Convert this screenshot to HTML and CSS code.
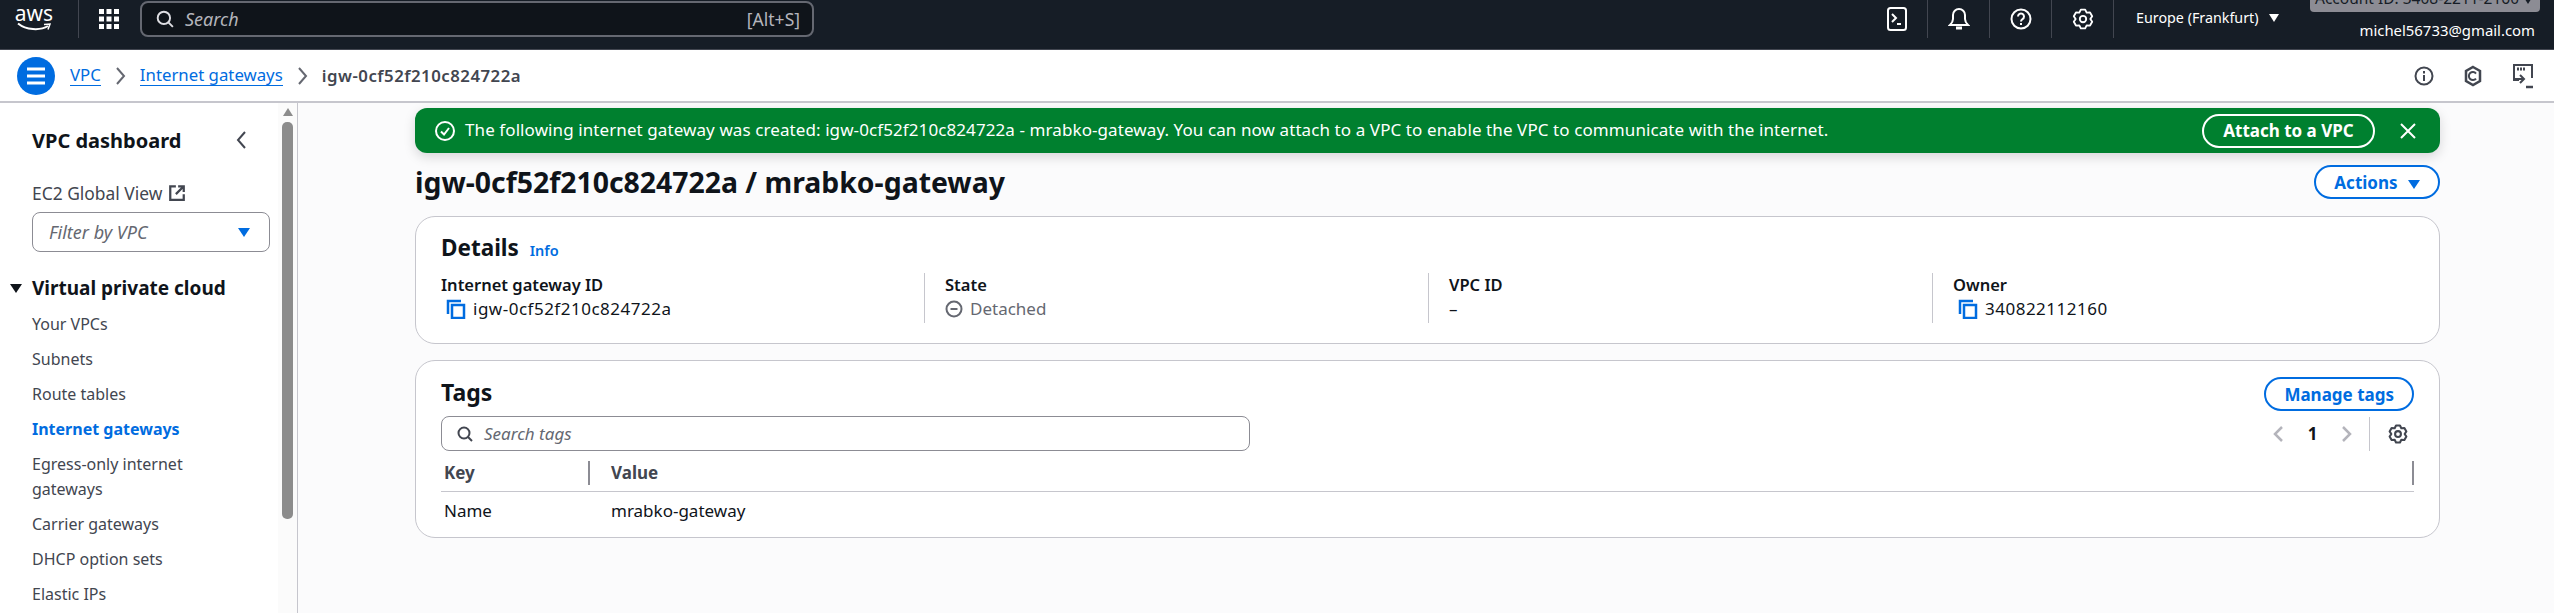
FILE: index.html
```html
<!DOCTYPE html>
<html lang="en">
<head>
  <meta charset="UTF-8">
  <title>igw-0cf52f210c824722a | VPC Console</title>
  <link rel="stylesheet" href="styles.css">
</head>
<body>

<header class="topbar">
  <div class="logo-wrap">
    <div class="logo">
      <span class="logo-text">aws</span>
      <svg class="logo-smile" width="34" height="10" viewBox="0 0 34 10"><path d="M1 1.5C9 8 23 9 31 4" fill="none" stroke="#fff" stroke-width="2"/><path d="M27 2.5l6-.5-2 5.500" fill="none" stroke="#fff" stroke-width="1.500"/></svg>
    </div>
  </div>
  <div class="apps">
    <svg width="20" height="20" viewBox="0 0 20 20" fill="#fff"><rect x="0" y="0" width="5" height="5"/><rect x="7.500" y="0" width="5" height="5"/><rect x="15" y="0" width="5" height="5"/><rect x="0" y="7.500" width="5" height="5"/><rect x="7.500" y="7.500" width="5" height="5"/><rect x="15" y="7.500" width="5" height="5"/><rect x="0" y="15" width="5" height="5"/><rect x="7.500" y="15" width="5" height="5"/><rect x="15" y="15" width="5" height="5"/></svg>
  </div>
  <div class="global-search">
    <svg width="18" height="18" viewBox="0 0 16 16" fill="none" stroke="#dedee3" stroke-width="1.700"><circle cx="7" cy="7" r="5.500"/><path d="M11 11l4 4"/></svg>
    <span class="global-search-text">Search</span>
    <span class="shortcut">[Alt+S]</span>
  </div>
  <div class="topbar-right">
    <div class="top-icon">
      <svg width="20" height="24" viewBox="0 0 20 24" fill="none" stroke="#fff" stroke-width="2"><rect x="1" y="1" width="18" height="22" rx="2.500"/><path d="M5 7l4 4-4 4M10 17h4"/></svg>
    </div>
    <div class="top-icon">
      <svg width="22" height="24" viewBox="0 0 22 24" fill="none" stroke="#fff" stroke-width="2"><path d="M2 18c2-2 3-3 3-6V8a6 6 0 0 1 12 0v4c0 3 1 4 3 6z"/><path d="M8 21h6" stroke-width="3"/></svg>
    </div>
    <div class="top-icon">
      <svg width="22" height="22" viewBox="0 0 22 22" fill="none" stroke="#fff" stroke-width="2"><circle cx="11" cy="11" r="9.500"/><path d="M8 8.500a3 3 0 1 1 4.500 2.600c-1 .6-1.500 1.200-1.500 2.400M11 15v2"/></svg>
    </div>
    <div class="top-icon top-icon-last">
      <svg width="22" height="24" viewBox="0 0 24 24" fill="none" stroke="#fff" stroke-width="2" stroke-linejoin="round"><path d="M9.640 1.770H14.360L16 5.070L19.680 4.840L22.040 8.930L20 12L22.040 15.070L19.680 19.160L16 18.930L14.360 22.230H9.640L8 18.930L4.320 19.160L1.960 15.070L4 12L1.960 8.930L4.320 4.840L8 5.070Z"/><circle cx="12" cy="12" r="3.500"/></svg>
    </div>
    <div class="region">Europe (Frankfurt) <span class="caret caret-white"></span></div>
    <div class="account">
      <div class="account-badge">Account ID: 3408-2211-2160 <span class="caret caret-dark"></span></div>
      <div class="account-mail">michel56733@gmail.com</div>
    </div>
  </div>
</header>

<nav class="crumbbar">
  <div class="menu-btn">
    <svg width="20" height="18" viewBox="0 0 20 18" fill="none" stroke="#fff" stroke-width="3"><path d="M1 2h18M1 9h18M1 16h18"/></svg>
  </div>
  <a class="crumb-link">VPC</a>
  <svg class="crumb-sep" width="10" height="18" viewBox="0 0 10 18" fill="none" stroke="#656871" stroke-width="2"><path d="M1 1l7 8-7 8"/></svg>
  <a class="crumb-link">Internet gateways</a>
  <svg class="crumb-sep" width="10" height="18" viewBox="0 0 10 18" fill="none" stroke="#656871" stroke-width="2"><path d="M1 1l7 8-7 8"/></svg>
  <span class="crumb-current">igw-0cf52f210c824722a</span>
  <div class="crumb-tools">
    <svg width="20" height="20" viewBox="0 0 20 20" fill="none" stroke="#424650" stroke-width="2"><circle cx="10" cy="10" r="8.500"/><path d="M10 9v6M10 5v2.500"/></svg>
    <svg width="20" height="22" viewBox="0 0 20 22" fill="none" stroke="#424650" stroke-width="2.500"><path d="M10 2l7 4v10l-7 4-7-4V6z"/><path d="M13 8.500a4 4 0 1 0 0 5" stroke-width="2"/></svg>
    <svg width="22" height="26" viewBox="0 0 22 26" fill="none" stroke="#424650" stroke-width="2"><path d="M7 17H2V2h18v13"/><path d="M5 6h9" stroke-dasharray="2 1" stroke-width="3"/><path d="M8 12l4 4-4 4M2 16h9" stroke-width="2"/><path d="M14 24h7" stroke-width="2.500"/></svg>
  </div>
</nav>

<div class="layout">
  <aside class="sidebar">
    <div class="side-scroll">
      <div class="side-title">
        <span>VPC dashboard</span>
        <svg width="10" height="18" viewBox="0 0 10 18" fill="none" stroke="#424650" stroke-width="2"><path d="M9 1L2 9l7 8"/></svg>
      </div>
      <a class="side-ec2">EC2 Global View
        <svg width="18" height="18" viewBox="0 0 16 16" fill="none" stroke="#424650" stroke-width="2"><path d="M7 2H2v12h12V9M9 2h5v5M14 2L7 9"/></svg>
      </a>
      <div class="side-filter">
        <span>Filter by VPC</span>
        <span class="caret caret-blue"></span>
      </div>
      <div class="side-section"><span class="caret caret-black"></span>Virtual private cloud</div>
      <ul class="side-list">
        <li>Your VPCs</li>
        <li>Subnets</li>
        <li>Route tables</li>
        <li class="active">Internet gateways</li>
        <li>Egress-only internet gateways</li>
        <li>Carrier gateways</li>
        <li>DHCP option sets</li>
        <li>Elastic IPs</li>
      </ul>
    </div>
    <div class="scrollbar">
      <span class="scroll-arrow"></span>
      <span class="scroll-thumb"></span>
    </div>
  </aside>

  <main class="content">
    <div class="flash">
      <svg width="22" height="22" viewBox="0 0 22 22" fill="none" stroke="#fff" stroke-width="2"><circle cx="11" cy="11" r="9"/><path d="M7 11.500l3 3 5-6.500"/></svg>
      <span class="flash-text">The following internet gateway was created: igw-0cf52f210c824722a - mrabko-gateway. You can now attach to a VPC to enable the VPC to communicate with the internet.</span>
      <button class="flash-btn">Attach to a VPC</button>
      <svg class="flash-close" width="18" height="18" viewBox="0 0 18 18" fill="none" stroke="#fff" stroke-width="2"><path d="M2 2l14 14M16 2L2 16"/></svg>
    </div>

    <div class="page-head">
      <h1>igw-0cf52f210c824722a / mrabko-gateway</h1>
      <button class="btn">Actions <span class="caret caret-blue"></span></button>
    </div>

    <section class="card details">
      <h2>Details <a class="info">Info</a></h2>
      <div class="detail-grid">
        <div class="detail-col">
          <div class="detail-label">Internet gateway ID</div>
          <div class="detail-value">
            <svg class="copy" width="20" height="20" viewBox="0 0 20 20" fill="none" stroke="#006ce0" stroke-width="2.500"><path d="M2 15V2h13"/><rect x="6" y="6" width="12" height="13"/></svg>
            igw-0cf52f210c824722a
          </div>
        </div>
        <div class="detail-col">
          <div class="detail-label">State</div>
          <div class="detail-value muted">
            <svg width="18" height="18" viewBox="0 0 18 18" fill="none" stroke="#656871" stroke-width="2"><circle cx="9" cy="9" r="7.500"/><path d="M5.500 9h7"/></svg>
            Detached
          </div>
        </div>
        <div class="detail-col">
          <div class="detail-label">VPC ID</div>
          <div class="detail-value">–</div>
        </div>
        <div class="detail-col">
          <div class="detail-label">Owner</div>
          <div class="detail-value">
            <svg class="copy" width="20" height="20" viewBox="0 0 20 20" fill="none" stroke="#006ce0" stroke-width="2.500"><path d="M2 15V2h13"/><rect x="6" y="6" width="12" height="13"/></svg>
            340822112160
          </div>
        </div>
      </div>
    </section>

    <section class="card tags">
      <div class="tags-head">
        <h2>Tags</h2>
        <button class="btn">Manage tags</button>
      </div>
      <div class="tags-tools">
        <div class="tag-search">
          <svg width="16" height="16" viewBox="0 0 16 16" fill="none" stroke="#424650" stroke-width="2"><circle cx="7" cy="7" r="5.500"/><path d="M11 11l4 4"/></svg>
          <span>Search tags</span>
        </div>
        <div class="pager">
          <svg width="11" height="18" viewBox="0 0 11 18" fill="none" stroke="#b4b4bb" stroke-width="2.500"><path d="M10 2L3 9l7 7"/></svg>
          <span class="page-num">1</span>
          <svg width="11" height="18" viewBox="0 0 11 18" fill="none" stroke="#b4b4bb" stroke-width="2.500"><path d="M1 2l7 7-7 7"/></svg>
          <span class="pager-gear">
            <svg width="20" height="20" viewBox="0 0 24 24" fill="none" stroke="#424650" stroke-width="2.500" stroke-linejoin="round"><path d="M9.640 1.770H14.360L16 5.070L19.680 4.840L22.040 8.930L20 12L22.040 15.070L19.680 19.160L16 18.930L14.360 22.230H9.640L8 18.930L4.320 19.160L1.960 15.070L4 12L1.960 8.930L4.320 4.840L8 5.070Z"/><circle cx="12" cy="12" r="3.500"/></svg>
          </span>
        </div>
      </div>
      <table class="tag-table">
        <thead>
          <tr>
            <th class="col-key"><span>Key</span></th>
            <th><span>Value</span></th>
          </tr>
        </thead>
        <tbody>
          <tr>
            <td>Name</td>
            <td>mrabko-gateway</td>
          </tr>
        </tbody>
      </table>
    </section>
  </main>
</div>

</body>
</html>
```

FILE: styles.css
```css
* {
  box-sizing: border-box;
}

html, body {
  height: 100%;
}

body {
  margin: 0;
  font-family: "Noto Sans", "Open Sans", sans-serif;
  font-size: 16px;
  color: #0f141a;
  background-color: #fff;
  overflow: hidden;
}

.caret {
  display: inline-block;
  width: 0;
  height: 0;
  border-style: solid;
  border-color: transparent;
  border-width: 9px 6px 0 6px;
}

.caret-white { border-top-color: #fff; border-width: 8px 5px 0 5px; }
.caret-dark { border-top-color: #161d26; border-width: 8px 5px 0 5px; }
.caret-blue { border-top-color: #006ce0; }
.caret-black { border-top-color: #0f141a; }

/* top bar */
.topbar {
  display: flex;
  height: 50px;
  background-color: #161d26;
  border-bottom: 1px solid #424650;
  color: #fff;
  overflow: hidden;
}

.logo-wrap {
  width: 79px;
  height: 38px;
  padding-left: 16px;
  border-right: 1px solid #424650;
}

.logo {
  display: flex;
  flex-direction: column;
  width: 36px;
  align-items: center;
}

.logo-text {
  font-size: 21px;
  line-height: 21px;
  margin-top: 3px;
}

.logo-smile {
  margin-top: -2px;
}

.apps {
  width: 61px;
  height: 38px;
  padding: 9px 0 0 20px;
}

.global-search {
  display: flex;
  align-items: center;
  gap: 11px;
  width: 674px;
  height: 36px;
  margin-top: 1px;
  padding: 0 12px 0 14px;
  background-color: #0f141a;
  border: 2px solid #656871;
  border-radius: 8px;
  color: #b4b4bb;
  font-size: 18px;
}

.global-search-text {
  flex: 1;
  font-style: italic;
}

.shortcut {
  font-size: 17.500px;
}

.topbar-right {
  display: flex;
  margin-left: auto;
  padding-right: 14px;
}

.top-icon {
  display: flex;
  align-items: center;
  justify-content: center;
  width: 62px;
  height: 38px;
  border-right: 1px solid #424650;
}

.region {
  width: 196px;
  padding: 8px 0 0 22px;
  font-size: 14.300px;
  white-space: nowrap;
}

.region .caret {
  margin-left: 7px;
  vertical-align: 1px;
}

.account {
  display: flex;
  flex-direction: column;
  align-items: flex-end;
  width: 230px;
}

.account-badge {
  width: 230px;
  height: 30px;
  margin-top: -18px;
  padding: 5px 0 0 5px;
  background-color: #8c8c94;
  border-radius: 4px;
  color: #161d26;
  font-size: 15.500px;
  white-space: nowrap;
}

.account-mail {
  margin-top: 7px;
  padding-right: 5px;
  font-size: 14.900px;
  line-height: 22px;
}

/* breadcrumb bar */
.crumbbar {
  display: flex;
  align-items: center;
  height: 53px;
  padding-left: 17px;
  background-color: #fff;
  border-bottom: 2px solid #c6c6cd;
  font-size: 16.800px;
}

.menu-btn {
  display: flex;
  align-items: center;
  justify-content: center;
  width: 38px;
  height: 38px;
  margin-right: 15px;
  background-color: #006ce0;
  border-radius: 50%;
}

.crumb-link {
  color: #006ce0;
  border-bottom: 1px solid #006ce0;
  line-height: 20px;
}

.crumb-sep {
  margin: 0 14px 0 15px;
}

.crumb-current {
  color: #424650;
  font-weight: 600;
  letter-spacing: 0.5px;
}

.crumb-tools {
  display: flex;
  align-items: center;
  gap: 29px;
  margin-left: auto;
  padding-right: 20px;
}

/* page layout */
.layout {
  display: flex;
  height: 510px;
  overflow: hidden;
}

.sidebar {
  display: flex;
  flex: none;
  width: 298px;
  height: 510px;
  background-color: #fbfbfb;
  border-right: 1px solid #c6c6cd;
  overflow: hidden;
}

.side-scroll {
  flex: none;
  width: 278px;
  padding: 20px 0 0 32px;
  background-color: #fff;
}

.side-title {
  display: flex;
  align-items: center;
  justify-content: space-between;
  height: 34px;
  padding-right: 32px;
  font-size: 20px;
  font-weight: 700;
}

.side-ec2 {
  display: flex;
  align-items: center;
  gap: 6px;
  margin-top: 23px;
  height: 25px;
  color: #424650;
  font-size: 17.400px;
}

.side-filter {
  display: flex;
  align-items: center;
  justify-content: space-between;
  width: 238px;
  height: 40px;
  margin-top: 7px;
  padding: 0 19px 0 16px;
  border: 1px solid #8c8c94;
  border-radius: 8px;
  color: #656871;
  font-size: 18px;
  font-style: italic;
}

.side-section {
  position: relative;
  margin-top: 24px;
  height: 25px;
  line-height: 25px;
  font-size: 19px;
  font-weight: 700;
}

.side-section .caret {
  position: absolute;
  left: -22px;
  top: 8px;
}

.side-list {
  margin: 11px 0 0;
  padding: 0;
  list-style: none;
  color: #424650;
}

.side-list li {
  width: 210px;
  margin-bottom: 10px;
  line-height: 25px;
}

.side-list .active {
  color: #006ce0;
  font-weight: 700;
}

.scrollbar {
  display: flex;
  flex-direction: column;
  align-items: center;
  flex: none;
  width: 11px;
  margin-left: 4px;
}

.scroll-arrow {
  margin-top: 5px;
  border-style: solid;
  border-color: transparent;
  border-width: 0 5px 8px 5px;
  border-bottom-color: #8c8c8c;
}

.scroll-thumb {
  width: 11px;
  height: 397px;
  margin-top: 6px;
  background-color: #8c8c8c;
  border-radius: 5px;
}

/* main content */
.content {
  flex: 1;
  padding: 5px 114px 0 117px;
  background-color: #fbfbfc;
  font-size: 17px;
}

.flash {
  display: flex;
  align-items: center;
  height: 45px;
  padding: 0 23px 0 19px;
  background-color: #00802f;
  border-radius: 12px;
  box-shadow: 0 4px 12px rgba(0, 7, 22, 0.15);
  color: #fff;
}

.flash-text {
  flex: 1;
  margin-left: 9px;
  padding-bottom: 2px;
  white-space: nowrap;
  letter-spacing: 0.09px;
}

.flash-btn {
  width: 173px;
  height: 34px;
  margin-right: 24px;
  background: none;
  border: 2px solid #fff;
  border-radius: 17px;
  color: #fff;
  font-family: inherit;
  font-size: 17px;
  font-weight: 700;
}

.page-head {
  display: flex;
  align-items: center;
  justify-content: space-between;
  height: 34px;
  margin-top: 12px;
}

h1 {
  margin: 0;
  font-size: 28.400px;
  font-weight: 700;
  line-height: 34px;
}

.btn {
  height: 34px;
  padding: 0 18px;
  background-color: #fff;
  border: 2px solid #006ce0;
  border-radius: 17px;
  color: #006ce0;
  font-family: inherit;
  font-size: 17px;
  font-weight: 700;
}

.btn .caret {
  margin-left: 6px;
}

.card {
  background-color: #fff;
  border: 1px solid #c6c6cd;
  border-radius: 20px;
  padding: 0 25px;
}

h2 {
  margin: 0;
  font-size: 23px;
  font-weight: 700;
}

.details {
  height: 128px;
  margin-top: 17px;
  padding-top: 13px;
}

.details h2 {
  font-size: 22.500px;
  line-height: 36px;
}

.info {
  margin-left: 5px;
  color: #006ce0;
  font-size: 14.500px;
  font-weight: 600;
}

.detail-grid {
  display: grid;
  grid-template-columns: 483px 504px 504px 1fr;
  margin-top: 5px;
}

.detail-col {
  height: 50px;
  padding-left: 20px;
  border-left: 1px solid #c6c6cd;
}

.detail-col:first-child {
  padding-left: 0;
  border-left: none;
}

.detail-label {
  font-size: 16.500px;
  font-weight: 600;
  line-height: 24px;
}

.detail-value {
  display: flex;
  align-items: center;
  gap: 7px;
  line-height: 24px;
  letter-spacing: 0.5px;
}

.muted {
  color: #656871;
  letter-spacing: 0;
}

.copy {
  margin-left: 5px;
}

.tags {
  height: 178px;
  margin-top: 16px;
  padding-top: 16px;
}

.tags-head {
  display: flex;
  align-items: center;
  justify-content: space-between;
  height: 34px;
}

.tags-head h2 {
  padding-bottom: 5px;
}

.tags-tools {
  display: flex;
  justify-content: space-between;
  margin-top: 5px;
}

.tag-search {
  display: flex;
  align-items: center;
  gap: 11px;
  width: 809px;
  height: 35px;
  padding-left: 15px;
  border: 1px solid #8c8c94;
  border-radius: 8px;
  color: #656871;
  font-style: italic;
}

.pager {
  display: flex;
  align-items: center;
}

.page-num {
  width: 59px;
  text-align: center;
  font-weight: 700;
}

.pager-gear {
  display: flex;
  align-items: center;
  height: 34px;
  margin-left: 16px;
  padding: 0 6px 0 18px;
  border-left: 1px solid #c6c6cd;
}

.tag-table {
  width: 100%;
  margin-top: 10px;
  border-collapse: collapse;
}

.tag-table th {
  position: relative;
  height: 30px;
  padding: 0 0 6px 21px;
  border-bottom: 1px solid #c6c6cd;
  color: #424650;
  font-weight: 700;
  text-align: left;
}

.tag-table th.col-key {
  width: 149px;
  padding-left: 3px;
}

.tag-table th span {
  display: block;
  height: 24px;
  line-height: 24px;
  border-right: 2px solid #8c8c94;
}

.tag-table td {
  height: 38px;
  padding: 0 0 0 21px;
}

.tag-table td:first-child {
  padding-left: 3px;
}
```
